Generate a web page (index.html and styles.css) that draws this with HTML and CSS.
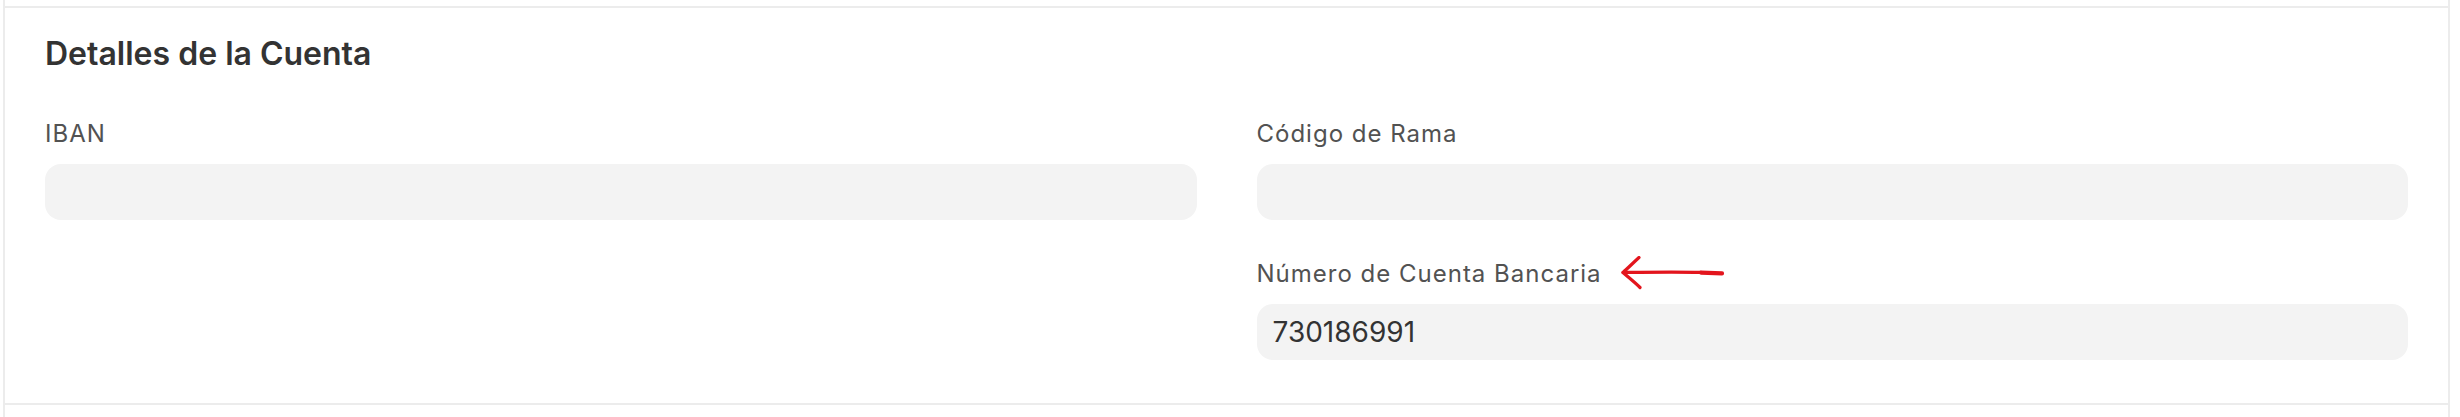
FILE: index.html
```html
<!DOCTYPE html>
<html lang="es">
<head>
<meta charset="utf-8">
<title>Detalles de la Cuenta</title>
<link rel="stylesheet" href="styles.css">
</head>
<body>
<div class="page">
  <div class="stub stub-top"></div>
  <section class="section">
    <h2 class="section-head">Detalles de la Cuenta</h2>
    <div class="section-body">
      <div class="column">
        <div class="field">
          <div class="label">IBAN</div>
          <div class="input"></div>
        </div>
      </div>
      <div class="column">
        <div class="field">
          <div class="label">Código de Rama</div>
          <div class="input"></div>
        </div>
        <div class="field">
          <div class="label">Número de Cuenta Bancaria
            <svg class="arrow" width="106" height="36" viewBox="0 0 106 36" aria-hidden="true">
              <path d="M4 16.5 C 28 16.2, 55 15.8, 82 16.4" fill="none" stroke="#e3151d" stroke-width="3.2" stroke-linecap="round"/>
              <path d="M82 16.6 L 103 17.4" fill="none" stroke="#e3151d" stroke-width="4.2" stroke-linecap="round"/>
              <path d="M20 1.5 C 14 7, 9 12, 4 16.5 C 9 21, 16 26.5, 21 31.5" fill="none" stroke="#e3151d" stroke-width="3.2" stroke-linecap="round" stroke-linejoin="round"/>
            </svg>
          </div>
          <div class="input">730186991</div>
        </div>
      </div>
    </div>
  </section>
  <div class="stub stub-bottom"></div>
</div>
</body>
</html>
```
FILE: styles.css
```css
html, body {
  margin: 0;
  padding: 0;
  background: #ffffff;
}
body {
  font-family: Inter, "Noto Sans", sans-serif;
  color: #333333;
}
.page {
  box-sizing: border-box;
  margin-left: 3px;
  width: 2447px;
  min-height: 417px;
  border-left: 2px solid #ececec;
  border-right: 2px solid #ececec;
  display: flex;
  flex-direction: column;
}
.stub-top {
  height: 6px;
  border-bottom: 2px solid #ececec;
}
.stub-bottom {
  flex: 1;
}
.section {
  padding: 26px 40px 43px 40px;
  border-bottom: 2px solid #ececec;
}
.section-head {
  margin: 0 0 44px 0;
  font-size: 32px;
  line-height: 40px;
  font-weight: 600;
  color: #333333;
}
.section-body {
  display: grid;
  grid-template-columns: 1fr 1fr;
  column-gap: 60px;
}
.column {
  display: flex;
  flex-direction: column;
  gap: 38px;
}
.field {
  display: flex;
  flex-direction: column;
}
.label {
  display: flex;
  align-items: center;
  gap: 17px;
  font-size: 24px;
  line-height: 32px;
  letter-spacing: 1px;
  color: #525252;
  margin-bottom: 14px;
  height: 32px;
}
.arrow {
  display: block;
  margin: -2px 0;
  flex: none;
}
.input {
  box-sizing: border-box;
  height: 56px;
  border-radius: 16px;
  background: #f3f3f3;
  padding: 0 16px;
  font-size: 28px;
  line-height: 56px;
  color: #333333;
}
```
